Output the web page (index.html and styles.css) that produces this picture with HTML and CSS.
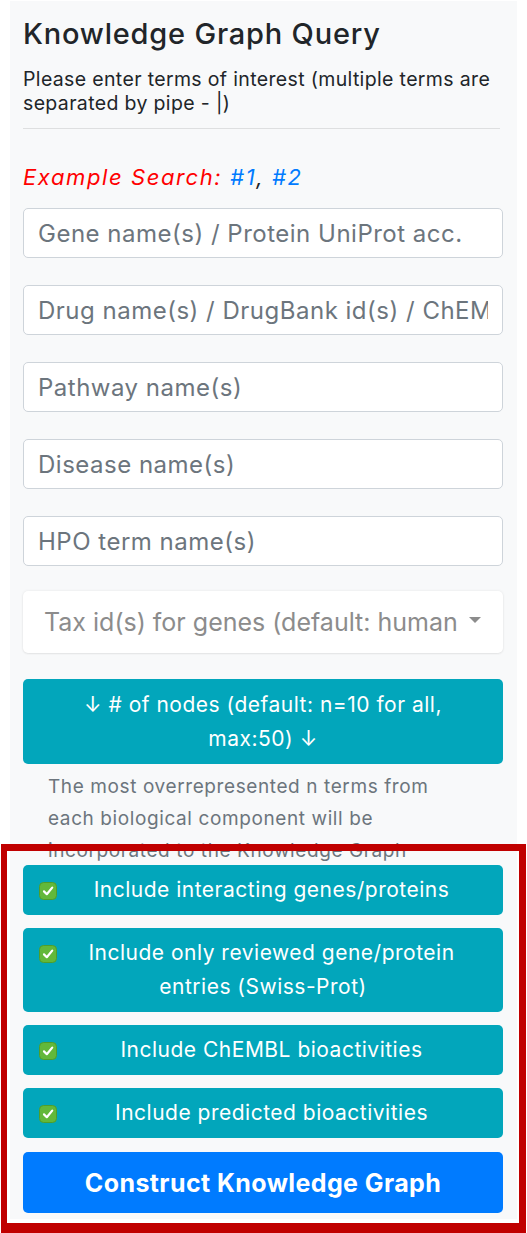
FILE: index.html
```html
<!DOCTYPE html>
<html>
<head>
<meta charset="utf-8">
<link rel="stylesheet" href="styles.css">
</head>
<body>
<div class="panel">
  <h2 class="title">Knowledge Graph Query</h2>
  <p class="lead-text">Please enter terms of interest (multiple terms are separated by pipe - |)</p>
  <hr class="divider">
  <p class="examples"><span class="ex-label">Example Search:</span> <a class="ex-link">#1</a>, <a class="ex-link">#2</a></p>
  <div class="fields">
    <input class="field" placeholder="Gene name(s) / Protein UniProt acc.">
    <input class="field" placeholder="Drug name(s) / DrugBank id(s) / ChEMBL id(s)">
    <input class="field" placeholder="Pathway name(s)">
    <input class="field" placeholder="Disease name(s)">
    <input class="field" placeholder="HPO term name(s)">
  </div>
  <div class="tax">
    <span class="tax-text">Tax id(s) for genes (default: human</span>
    <span class="caret"></span>
  </div>
  <div class="nodes-btn">↓ # of nodes (default: n=10 for all,<br>max:50) ↓</div>
  <div class="help">The most overrepresented n terms from each biological component will be incorporated to the Knowledge Graph</div>
  <div class="options">
    <label class="opt"><svg class="tick" viewBox="0 0 18 18"><rect x="0.5" y="0.5" width="17" height="17" rx="4" fill="#62b83a" stroke="#4e9e2a"/><path d="M5 9.4 L7.8 12.2 L13.2 5.6" fill="none" stroke="#fff" stroke-width="2.2" stroke-linecap="round" stroke-linejoin="round"/></svg>Include interacting genes/proteins</label>
    <label class="opt"><svg class="tick" viewBox="0 0 18 18"><rect x="0.5" y="0.5" width="17" height="17" rx="4" fill="#62b83a" stroke="#4e9e2a"/><path d="M5 9.4 L7.8 12.2 L13.2 5.6" fill="none" stroke="#fff" stroke-width="2.2" stroke-linecap="round" stroke-linejoin="round"/></svg>Include only reviewed gene/protein entries (Swiss-Prot)</label>
    <label class="opt"><svg class="tick" viewBox="0 0 18 18"><rect x="0.5" y="0.5" width="17" height="17" rx="4" fill="#62b83a" stroke="#4e9e2a"/><path d="M5 9.4 L7.8 12.2 L13.2 5.6" fill="none" stroke="#fff" stroke-width="2.2" stroke-linecap="round" stroke-linejoin="round"/></svg>Include ChEMBL bioactivities</label>
    <label class="opt"><svg class="tick" viewBox="0 0 18 18"><rect x="0.5" y="0.5" width="17" height="17" rx="4" fill="#62b83a" stroke="#4e9e2a"/><path d="M5 9.4 L7.8 12.2 L13.2 5.6" fill="none" stroke="#fff" stroke-width="2.2" stroke-linecap="round" stroke-linejoin="round"/></svg>Include predicted bioactivities</label>
  </div>
  <button class="construct">Construct Knowledge Graph</button>
</div>
<div class="highlight"></div>
</body>
</html>
```

FILE: styles.css
```css
* { box-sizing: border-box; }
html, body { margin: 0; padding: 0; }
body {
  background: #fff;
  font-family: Inter, "Noto Sans", sans-serif;
  color: #212529;
  width: 527px;
  height: 1233px;
  overflow: hidden;
  position: relative;
}
.panel {
  margin: 1px 0 0 10px;
  width: 507px;
  height: 1218px;
  background: #f8f9fa;
  padding: 15px 14px 0 13px;
}
.title {
  margin: 0;
  font-size: 29px;
  font-weight: 500;
  line-height: 35px;
  letter-spacing: 0.8px;
}
.lead-text {
  margin: 16px 0 0 0;
  font-size: 19.5px;
  line-height: 24px;
  letter-spacing: 0.35px;
}
.divider {
  margin: 13px 3px 0 0;
  border: 0;
  border-top: 1px solid rgba(0, 0, 0, .1);
  height: 0;
}
.examples {
  margin: 33px 0 0;
  font-size: 22px;
  line-height: 30px;
  font-style: italic;
  letter-spacing: 1.6px;
}
.ex-label { color: #ff0000; }
.ex-link { color: #007bff; }
.fields {
  margin-top: 16px;
  display: flex;
  flex-direction: column;
  gap: 27px;
}
.field {
  display: block;
  width: 100%;
  height: 50px;
  border: 1px solid #ced4da;
  border-radius: 5px;
  background: #fff;
  padding: 0 14px;
  font-family: inherit;
  font-size: 24px;
  letter-spacing: 0.5px;
  color: #495057;
  outline: none;
}
.field::placeholder { color: #6c757d; opacity: 1; }
.tax {
  margin-top: 25px;
  height: 62px;
  background: #fff;
  border-radius: 5px;
  box-shadow: 0 0 3px rgba(0, 0, 0, .08), 0 1px 2px rgba(0, 0, 0, .06);
  display: flex;
  align-items: center;
  padding: 0 22px 0 21px;
}
.tax-text {
  white-space: nowrap;
  font-size: 25px;
  color: #8c8c8c;
}
.caret {
  width: 0;
  height: 0;
  border-left: 6px solid transparent;
  border-right: 6px solid transparent;
  border-top: 6px solid #8c8c8c;
  margin-left: auto;
  margin-top: -4px;
}
.nodes-btn {
  margin-top: 26px;
  background: #02a6bb;
  color: #fff;
  border-radius: 5px;
  padding: 8.5px 16px;
  font-size: 21px;
  line-height: 34px;
  letter-spacing: 0.5px;
  text-align: center;
}
.help {
  margin: 7px 0 0 25px;
  width: 420px;
  height: 94px;
  font-size: 19px;
  line-height: 32px;
  letter-spacing: 0.6px;
  color: #6c757d;
}
.options {
  display: flex;
  flex-direction: column;
  gap: 13px;
}
.opt {
  position: relative;
  z-index: 1;
  display: block;
  background: #02a6bb;
  color: #fff;
  border-radius: 5px;
  padding: 8px 17px;
  font-size: 21px;
  line-height: 34px;
  letter-spacing: 0.5px;
  text-align: center;
}
.tick {
  float: left;
  width: 18px;
  height: 18px;
  margin-top: 9px;
  margin-left: -1px;
}
.construct {
  display: block;
  width: 100%;
  margin-top: 14px;
  height: 61px;
  border: 0;
  border-radius: 5px;
  background: #007bff;
  color: #fff;
  font-family: inherit;
  font-size: 25px;
  font-weight: 700;
  letter-spacing: 0.4px;
}
.highlight {
  position: absolute;
  z-index: 2;
  left: 1px;
  top: 844px;
  width: 525px;
  height: 389px;
  border: 7px solid #c00000;
  border-left-width: 6px;
  border-bottom-width: 10px;
  pointer-events: none;
}
```
